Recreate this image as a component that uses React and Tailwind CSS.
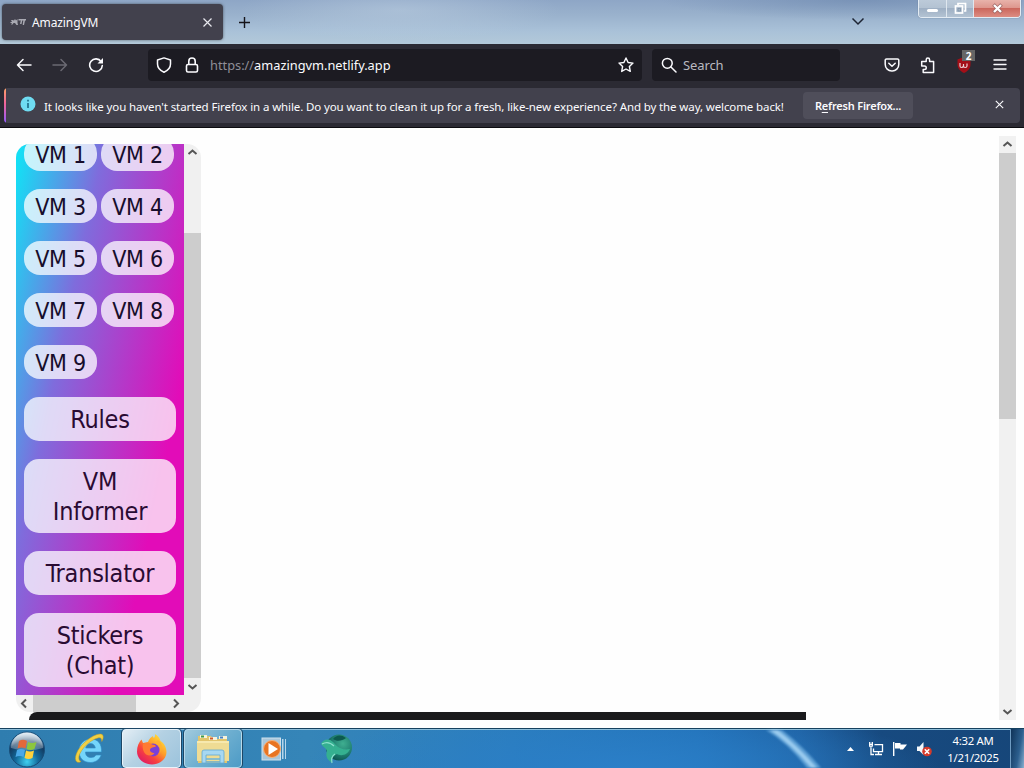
import React from "react";

const SEGOE = "font-['Noto_Sans','Open_Sans',sans-serif]";

function Chevron({ dir }) {
  const d = {
    up: "M4.5 10 8.5 6.500 12.5 10",
    down: "M4.5 7 8.5 10.5 12.5 7",
    left: "M10 4.5 6 8.5 10 12.5",
    right: "M7 4.5 11 8.5 7 12.5",
  }[dir];
  return (
    <svg width="17" height="17" viewBox="0 0 17 17" fill="none" stroke="#555" strokeWidth="2" className="shrink-0">
      <path d={d} />
    </svg>
  );
}

function TabStrip() {
  return (
    <header className="flex h-11 items-start bg-[radial-gradient(ellipse_160px_30px_at_400px_10px,rgba(190,208,226,0.5),transparent),radial-gradient(ellipse_200px_20px_at_860px_0px,rgba(100,128,168,0.5),transparent),linear-gradient(180deg,#8ea6c6_0%,#9ab2cd_35%,#a9c1d8_70%,#b3c9d9_100%)]">
      <div className="mt-1 ml-0.5 flex h-9 w-[221px] items-center rounded bg-[#42414d] pr-2.5 pl-2 shadow-[0_0_3px_rgba(0,0,0,0.5)]">
        <svg width="16" height="16" viewBox="0 0 16 16" fill="#a9a9b2">
          <path d="M1 6l1 2H.500v1H2L1 10.500h1.500L3.500 9H5l1.500 2H8L7.500 9V5L6 6.500 5 5 4 6.500 2.500 6zM8.500 5H16v1.500h-1L14 11h-1.300l.6-4.500h-1L11.500 10H10l.8-3.500H8.500z" />
        </svg>
        <span className="ml-1.5 flex-1 text-[12px] tracking-[-0.1px] text-[#fbfbfe]">
          <span className="relative top-px">AmazingVM</span>
        </span>
        <svg width="11" height="11" viewBox="0 0 11 11" stroke="#e8e8ee" strokeWidth="1.2">
          <path d="M1.5 1.5l8 8M9.5 1.5l-8 8" />
        </svg>
      </div>
      <svg width="13" height="13" viewBox="0 0 13 13" stroke="#15141a" strokeWidth="1.4" className="mt-4 ml-[15px]">
        <path d="M6.5 1v11M1 6.5h11" />
      </svg>
      <svg width="14" height="9" viewBox="0 0 14 9" fill="none" stroke="#1d2433" strokeWidth="1.5" className="mt-[17px] ml-auto">
        <path d="M1.5 1.5 7 7 12.5 1.5" />
      </svg>
      <div className="mr-[3px] ml-[53px] flex h-[18px] w-[103px] overflow-hidden rounded-b border border-t-0 border-[#e3ebf3] shadow-[0_0_1px_#41546c]">
        <div className="flex w-7 items-end justify-center border-r border-[#dfe7ef] bg-[linear-gradient(180deg,#bccad9_0%,#b3c2d2_48%,#9fb0c4_50%,#b3c3d3_100%)]">
          <div className="mb-[5px] h-[3px] w-[11px] rounded-sm bg-white" />
        </div>
        <div className="flex w-[27px] items-center justify-center border-r border-[#dfe7ef] bg-[linear-gradient(180deg,#bccad9_0%,#b3c2d2_48%,#9fb0c4_50%,#b3c3d3_100%)]">
          <svg width="13" height="13" viewBox="0 0 13 13" fill="none" stroke="#fff" strokeWidth="1.7">
            <path d="M4 3V1.5h7.5V9H10" />
            <rect x="1.5" y="4" width="7" height="7" />
            <path d="M4 6.5h2.5V9H4z" stroke="#7f92a8" strokeWidth="0.7" />
          </svg>
        </div>
        <div className="flex flex-1 items-center justify-center bg-[linear-gradient(180deg,#e8b3ab_0%,#dd958c_48%,#cb675d_50%,#dd8d82_100%)]">
          <svg width="13" height="11" viewBox="0 0 13 11">
            <path d="M2.5 1.5l8 8M10.5 1.5l-8 8" stroke="#9a6462" strokeWidth="3.6" />
            <path d="M3 2l7 7M10 2l-7 7" stroke="#fff" strokeWidth="2.3" />
          </svg>
        </div>
      </div>
    </header>
  );
}

function NavBar() {
  return (
    <nav className="flex h-11 items-center bg-[#2b2a33] pb-0.5 text-[#fbfbfe]">
      <svg width="16" height="16" viewBox="0 0 16 16" fill="none" stroke="currentColor" strokeWidth="1.5" strokeLinecap="round" strokeLinejoin="round" className="ml-4">
        <path d="M15 8H1.5M7 2.500 1.5 8l5.5 5.500" />
      </svg>
      <svg width="16" height="16" viewBox="0 0 16 16" fill="none" stroke="#6b6a73" strokeWidth="1.5" strokeLinecap="round" strokeLinejoin="round" className="ml-5">
        <path d="M1 8h13.5M9 2.500l5.500 5.500L9 13.500" />
      </svg>
      <svg width="16" height="16" viewBox="0 0 16 16" fill="none" stroke="currentColor" strokeWidth="1.6" strokeLinecap="round" className="ml-5">
        <path d="M13.2 4.6A6.3 6.3 0 1 0 14.3 8.5" />
        <path d="M15 1v5.5H9.5z" fill="currentColor" stroke="none" />
      </svg>
      <div className="ml-11 flex h-8 w-[494px] items-center rounded bg-[#1c1b22]">
        <svg width="16" height="16" viewBox="0 0 16 16" fill="none" stroke="currentColor" strokeWidth="1.5" strokeLinejoin="round" className="ml-2">
          <path d="M8 .9 14.500 3v4c0 3.800-3.200 6.800-6.500 8.200C4.700 13.800 1.500 10.800 1.500 7V3z" />
        </svg>
        <svg width="16" height="16" viewBox="0 0 16 16" fill="none" stroke="currentColor" strokeWidth="1.6" className="ml-3">
          <rect x="2.500" y="7.500" width="11" height="7.500" rx="1.500" />
          <path d="M4.800 7.500V4.200a3.200 3.200 0 0 1 6.400 0v3.300" />
        </svg>
        <span className="ml-2.5 flex-1 pt-px text-[12.8px] whitespace-nowrap text-[#fbfbfe]">
          <span className="text-[#8f8e97]">https://</span>amazingvm.netlify.app
        </span>
        <svg width="16" height="16" viewBox="0 0 16 16" fill="none" stroke="currentColor" strokeWidth="1.4" strokeLinejoin="round" className="mr-2">
          <path d="M8 1l2.100 4.500 4.900.6-3.600 3.400.9 4.900L8 12l-4.300 2.400.9-4.900L1 6.100l4.900-.6z" />
        </svg>
      </div>
      <div className="ml-2.5 flex h-8 w-[188px] items-center rounded bg-[#1c1b22]">
        <svg width="16" height="16" viewBox="0 0 16 16" fill="none" stroke="currentColor" strokeWidth="1.5" strokeLinecap="round" className="ml-[9px]">
          <circle cx="6.300" cy="6.300" r="4.900" />
          <path d="M10 10l5 5" />
        </svg>
        <span className="ml-1.5 pt-px text-[13px] tracking-[-0.1px] text-[#b9b9c0]">Search</span>
      </div>
      <svg width="16" height="16" viewBox="0 0 16 16" fill="none" stroke="currentColor" strokeWidth="1.5" strokeLinecap="round" strokeLinejoin="round" className="ml-11">
        <path d="M2.500 2h11a1.300 1.300 0 0 1 1.300 1.300v4A6.600 6.600 0 0 1 8 14a6.600 6.600 0 0 1-6.800-6.700v-4A1.300 1.300 0 0 1 2.500 2z" />
        <path d="M4.800 6.200 8 9.200l3.200-3" />
      </svg>
      <svg width="16" height="17" viewBox="0 0 16 17" fill="none" stroke="currentColor" strokeWidth="1.5" strokeLinejoin="round" className="ml-5">
        <path d="M6.200 4.500V2.800a1.700 1.700 0 0 1 3.400 0v1.700h4v11H3.200v-3h1.300a1.700 1.700 0 0 0 0-3.500H1.700V4.500z" />
      </svg>
      <div className="relative ml-5 flex h-5 w-4 items-center justify-center">
        <svg width="16" height="16" viewBox="0 0 16 16">
          <path d="M8 0l6.500 2.500v5C14.500 12 11 14.500 8 16 5 14.500 1.500 12 1.500 7.500v-5z" fill="#a30f18" />
          <path d="M4 6v3q0 1.500 1.500 1.500T7.500 9V7M7.500 9q0 1.500 1.700 1.500T11 9V6.500" fill="none" stroke="#ecd0d4" strokeWidth="1.2" />
        </svg>
        <span className="absolute -top-[5px] left-[6px] flex h-[11px] w-[13px] items-center justify-center bg-[#666] text-[10px] leading-none font-bold text-white">2</span>
      </div>
      <svg width="14" height="12" viewBox="0 0 14 12" stroke="currentColor" strokeWidth="1.4" strokeLinecap="round" className="ml-[21px]">
        <path d="M1 1h12M1 5.500h12M1 10h12" />
      </svg>
    </nav>
  );
}

function Notice() {
  return (
    <div className="h-10 border-b border-[#0c0c10] bg-[#2b2a33] px-1 pb-1">
      <div className="flex h-[35px] items-center overflow-hidden rounded bg-[#42414d] text-[#fbfbfe]">
        <div className="h-full w-0.5 bg-[linear-gradient(180deg,#ffa266_0%,#f0649a_45%,#9059ff_100%)]" />
        <svg width="16" height="16" viewBox="0 0 16 16" className="mb-[3px] ml-3.5">
          <circle cx="8" cy="8" r="7.5" fill="#6fdcf2" />
          <path d="M8 7v5M8 3.800v1.600" stroke="#1a6a84" strokeWidth="1.6" />
        </svg>
        <span className="ml-2 w-[747px] pt-0.5 text-[11.5px] tracking-[-0.112px] whitespace-nowrap">
          It looks like you haven't started Firefox in a while. Do you want to clean it up for a fresh, like-new experience? And by the way, welcome back!
        </span>
        <span className="ml-3 flex h-[27px] w-[110px] items-center justify-center rounded bg-[#4f4e5a] pt-px text-[11px] font-semibold tracking-[-0.2px] whitespace-nowrap">
          R<span className="underline underline-offset-2">e</span>fresh Firefox...
        </span>
        <svg width="9" height="9" viewBox="0 0 9 9" stroke="#fbfbfe" strokeWidth="1.1" className="mr-4 mb-[3px] ml-auto">
          <path d="M.8.8l7.400 7.400M8.200.8.8 8.200" />
        </svg>
      </div>
    </div>
  );
}

function VmButton({ n }) {
  return (
    <button className="h-[34px] w-[73px] rounded-[16px] bg-white/75 pt-0.5 text-[23px] leading-[32px] tracking-[-0.25px] whitespace-nowrap text-[#170d2b]">
      VM {n}
    </button>
  );
}

function WideButton({ lines }) {
  return (
    <button className="flex w-[152px] flex-col items-center rounded-[15px] bg-white/75 pt-2 pb-1.5 text-[25px] leading-[30px] tracking-[-0.25px] whitespace-nowrap text-[#2a0b33]">
      {lines.map((l) => (
        <span key={l}>{l}</span>
      ))}
    </button>
  );
}

function SidePanel() {
  return (
    <aside className="w-[185px] overflow-hidden rounded-[14px] bg-[#f0f0f0] font-['DejaVu_Sans_Condensed','DejaVu_Sans',sans-serif] [font-stretch:condensed]">
      <div className="flex h-[551px]">
        <div className="h-full w-[168px] overflow-hidden bg-[linear-gradient(102deg,#14dff5_2%,#7f6cdc_31%,#e20cb8_76%)] px-2">
          <div className="-mt-[7px] flex flex-col gap-[18px]">
            <div className="grid grid-cols-[73px_73px] gap-x-1 gap-y-[18px]">
              {[1, 2, 3, 4, 5, 6, 7, 8, 9].map((n) => (
                <VmButton key={n} n={n} />
              ))}
            </div>
            <WideButton lines={["Rules"]} />
            <WideButton lines={["VM", "Informer"]} />
            <WideButton lines={["Translator"]} />
            <WideButton lines={["Stickers", "(Chat)"]} />
          </div>
        </div>
        <div className="flex w-[17px] flex-col">
          <Chevron dir="up" />
          <div className="mt-[72px] flex-1 bg-[#cdcdcd]" />
          <Chevron dir="down" />
        </div>
      </div>
      <div className="flex h-[17px]">
        <Chevron dir="left" />
        <div className="w-[103px] bg-[#cdcdcd]" />
        <div className="w-[31px]" />
        <Chevron dir="right" />
      </div>
    </aside>
  );
}

function Page() {
  return (
    <main className="flex h-[600px] bg-[#fefefe] p-2">
      <div className="flex flex-1 flex-col overflow-hidden pt-2 pl-2">
        <SidePanel />
        <div className="ml-[13px] h-2 w-[777px] rounded-tl-[10px] bg-[#1a1a1c]" />
      </div>
      <div className="flex w-[17px] flex-col bg-[#f1f1f1]">
        <Chevron dir="up" />
        <div className="h-[266px] bg-[#cdcdcd]" />
        <div className="flex-1" />
        <Chevron dir="down" />
      </div>
    </main>
  );
}

function StartOrb() {
  return (
    <svg width="38" height="38" viewBox="0 0 38 38" className="ml-2 shrink-0">
      <defs>
        <radialGradient id="orb" cx="50%" cy="85%" r="80%">
          <stop offset="0" stopColor="#3fd0f0" />
          <stop offset="0.4" stopColor="#136a9c" />
          <stop offset="0.75" stopColor="#12395f" />
          <stop offset="1" stopColor="#8fb4cf" />
        </radialGradient>
        <linearGradient id="gloss" x1="0" y1="0" x2="0" y2="1">
          <stop offset="0" stopColor="#fff" stopOpacity="0.75" />
          <stop offset="1" stopColor="#fff" stopOpacity="0.2" />
        </linearGradient>
      </defs>
      <circle cx="19" cy="19.5" r="17.5" fill="url(#orb)" stroke="#174c77" />
      <path d="M3 18a16 15.5 0 0 1 32 0q-16 5-32 0z" fill="url(#gloss)" />
      <path d="M11 11q4-2.500 8 0l-1.500 7.500q-4-2-8 0z" fill="#e2683a" />
      <path d="M20 12q4 2 8.500 0l-2 7q-4 2-8 0z" fill="#8cc63e" />
      <path d="M9 20q4-2 8 0l-1.500 7q-4-2-8 0z" fill="#4aa8e8" />
      <path d="M18 20.500q4 2 8 0l-1.500 7.500q-4 2-8 0z" fill="#ffd23c" />
    </svg>
  );
}

function ExplorerE() {
  return (
    <svg width="34" height="34" viewBox="0 0 34 34">
      <path d="M28.500 20H12.500c0 4 2.500 5.500 5.500 5.500 2.500 0 4-.8 5-2.500h5.200C26.500 28 22 30.500 17.500 30.500 10.500 30.500 6 26 6 19S11 7 17.800 7C25 7 29 12 28.500 20zM12.700 16h9.600c-.4-2.800-2.200-4.400-4.700-4.400s-4.400 1.600-4.900 4.400z" fill="#74d5fa" stroke="#2d8bc7" strokeWidth="0.6" />
      <path d="M4 30C0 27 4 17 12 10 20 3 28 0 30 3.500c.7 2-.2 4-1.200 6 0-3-1-4.500-4-3.500C17 8 8 17 6 24c-.5 3 0 4.500 2 5.500-1.500 1-3 1-4 .5z" fill="#f0d044" stroke="#c39b1f" strokeWidth="0.5" />
    </svg>
  );
}

function FirefoxIcon() {
  return (
    <svg width="32" height="34" viewBox="0 0 32 34">
      <defs>
        <linearGradient id="fox" x1="0.85" y1="0.1" x2="0.2" y2="0.9">
          <stop offset="0" stopColor="#ffe03a" />
          <stop offset="0.4" stopColor="#ff9a2a" />
          <stop offset="0.7" stopColor="#f8433e" />
          <stop offset="1" stopColor="#e3205f" />
        </linearGradient>
      </defs>
      <path d="M19 2c3 2 5 4 5.500 7 3 1.500 6 6 6 11 0 7-6.500 12.500-14.500 12.500S1 27 1 19.500C1 14 3 10 5.500 7.500L7 11l5-1c1-3 3-5 5-6 0 1 .5 1.500 1 2 1-1 1.300-2.500 1-4z" fill="url(#fox)" />
      <circle cx="17" cy="18" r="6.500" fill="#7a3fd8" />
      <path d="M7 12c3-2 7-1.500 9 .5 2 0 4 .8 4 2-2 1-5 .7-6 3-.5 2 2 4 4.500 3.200-1.500 4-9 4-11-1.700-1-3-.8-5-.5-7z" fill="#ff7a33" />
      <path d="M18 11c5-1 8 5 6 10 3-4 2-11-2-13z" fill="#ffb22e" />
    </svg>
  );
}

function FolderIcon() {
  return (
    <svg width="34" height="32" viewBox="0 0 34 32">
      <path d="M2 3h13l2 3h14v24H2z" fill="#e2c56c" />
      <path d="M4 2h7v3H4zM13 4h8v3h-8zM23 3h8v3h-8z" fill="#f6f3dc" />
      <path d="M5 2.500h3v2H5z" fill="#3f9a4d" />
      <path d="M14 4.500h3v2h-3z" fill="#d05d2b" />
      <path d="M24 3.500h3v2h-3z" fill="#4480c8" />
      <path d="M1 8h32v20H1z" fill="#efdc94" />
      <path d="M1 9h32" stroke="#fff6c8" />
      <path d="M6 30V19q0-2 2-2h18q2 0 2 2v11h-4v-8H10v8z" fill="#a7d8f1" stroke="#5fa8d4" strokeWidth="0.8" />
      <path d="M10 26h14M10 29h14" stroke="#6ab2dc" strokeWidth="1.5" />
    </svg>
  );
}

function MediaIcon() {
  return (
    <svg width="26" height="24" viewBox="0 0 26 24">
      <path d="M21 2h1.500v20H21zM24 2h1v20h-1z" fill="#b7d6ea" />
      <rect x="1" y="1" width="18.500" height="22" fill="#a9c6da" stroke="#cfe1ed" />
      <circle cx="11" cy="12" r="8.500" fill="#e87422" stroke="#f5b27c" />
      <path d="M7.500 6v12L17 12z" fill="#fff" />
    </svg>
  );
}

function GreenBall() {
  return (
    <svg width="32" height="30" viewBox="0 0 32 30">
      <defs>
        <radialGradient id="ball" cx="65%" cy="35%" r="70%">
          <stop offset="0" stopColor="#3fae90" />
          <stop offset="0.6" stopColor="#1f7f70" />
          <stop offset="1" stopColor="#0c5350" />
        </radialGradient>
      </defs>
      <circle cx="18" cy="13.5" r="13" fill="url(#ball)" />
      <path d="M0 10c2-5 8-6 12-2 3 3 7 9 17 7-3 7-10 7-13 5-5 2-6 5-5 9C7 26 4 23 6 17 5 14 2 13 0 10z" fill="#35b090" />
      <path d="M1 10c5-3 9-1 12 2M14 20c-3 2-4 5-3 9" fill="none" stroke="#8be0cd" strokeWidth="1.2" />
      <path d="M12 5c4 3 9 2 13-1-5-4-10-3-13 1z" fill="#0d5a50" />
    </svg>
  );
}

function Taskbar() {
  return (
    <footer className="flex h-10 items-center border-t border-[#16415f] bg-[radial-gradient(ellipse_320px_60px_at_620px_40px,#2b7fc8_0%,transparent_100%),linear-gradient(90deg,#2f7daf_0%,#3585b8_30%,#2b7dbd_50%,#2272b9_68%,#1f62a4_78%,#174a80_86%,#164679_100%)] shadow-[inset_0_1px_0_#8fc0dc]">
      <StartOrb />
      <div className="ml-[27px]">
        <ExplorerE />
      </div>
      <div className="ml-[15px] flex h-[39px] w-[59px] items-center justify-center rounded border border-[#e8f3fa] bg-[linear-gradient(135deg,#e3eef5_0%,#b4d1e3_45%,#9cc3dc_100%)] shadow-[0_0_0_1px_#1d4766]">
        <FirefoxIcon />
      </div>
      <div className="ml-[3px] flex h-[39px] w-[58px] items-center justify-center rounded border border-[#b7d9ea] bg-[linear-gradient(135deg,#a1cadd_0%,#6eafd0_50%,#4d9bc6_100%)] shadow-[0_0_0_1px_#1d4766]">
        <FolderIcon />
      </div>
      <div className="ml-[19px]">
        <MediaIcon />
      </div>
      <div className="ml-[34px]">
        <GreenBall />
      </div>
      <svg width="64" height="39" viewBox="0 0 64 39" className="ml-[411px] blur-[0.8px]">
        <path d="M2 1h16Q40 18 57 39H43Q24 14 2 1z" fill="#8cc8f2" opacity="0.55" />
        <path d="M6 1h8Q36 19 53 39h-6Q28 16 6 1z" fill="#b5def9" opacity="0.7" />
      </svg>
      <div className="ml-auto flex h-full items-center text-white">
        <svg width="7" height="4" viewBox="0 0 7 4" fill="#fff">
          <path d="M0 4 3.500 0 7 4z" />
        </svg>
        <svg width="16" height="16" viewBox="0 0 16 16" fill="none" stroke="#fff" strokeWidth="1.3" className="ml-3.5">
          <path d="M6.500 3.700h8v7h-9V7.500M7 13.500h7M10.500 10.700v2.800M3 7v6.500h3M1.700 1v3.500q0 1.500 1.300 1.500t1.300-1.500V1M1 3.500h4" />
        </svg>
        <svg width="16" height="16" viewBox="0 0 16 16" className="ml-2">
          <path d="M1.700 1v14" stroke="#fff" strokeWidth="1.4" />
          <path d="M3 2h5.500v1.500H15L13.500 5.500 11 8.500H8V7.500H3z" fill="#fff" />
        </svg>
        <svg width="17" height="16" viewBox="0 0 17 16" className="ml-2">
          <path d="M1 5.500h2.500L7.500 1v13L3.500 10H1z" fill="#f4f8fb" />
          <circle cx="11" cy="10.5" r="4.800" fill="#d63a2a" />
          <path d="M8.800 8.300l4.400 4.400M13.200 8.300l-4.400 4.400" stroke="#fff" strokeWidth="1.6" />
        </svg>
        <div className="ml-3 flex w-[56px] flex-col items-center text-[11.3px] leading-[17px] tracking-[-0.25px] whitespace-nowrap">
          <span>4:32 AM</span>
          <span>1/21/2025</span>
        </div>
        <div className="ml-[9px] h-full w-[14px] border-l border-[#6f9cc2] bg-[linear-gradient(100deg,#0f3358_0%,#2c5f8e_60%,#8ab0cf_100%)]" />
      </div>
    </footer>
  );
}

export default function App() {
  return (
    <div className={`flex h-[768px] w-[1024px] flex-col overflow-hidden bg-white ${SEGOE}`}>
      <TabStrip />
      <NavBar />
      <Notice />
      <Page />
      <Taskbar />
    </div>
  );
}
